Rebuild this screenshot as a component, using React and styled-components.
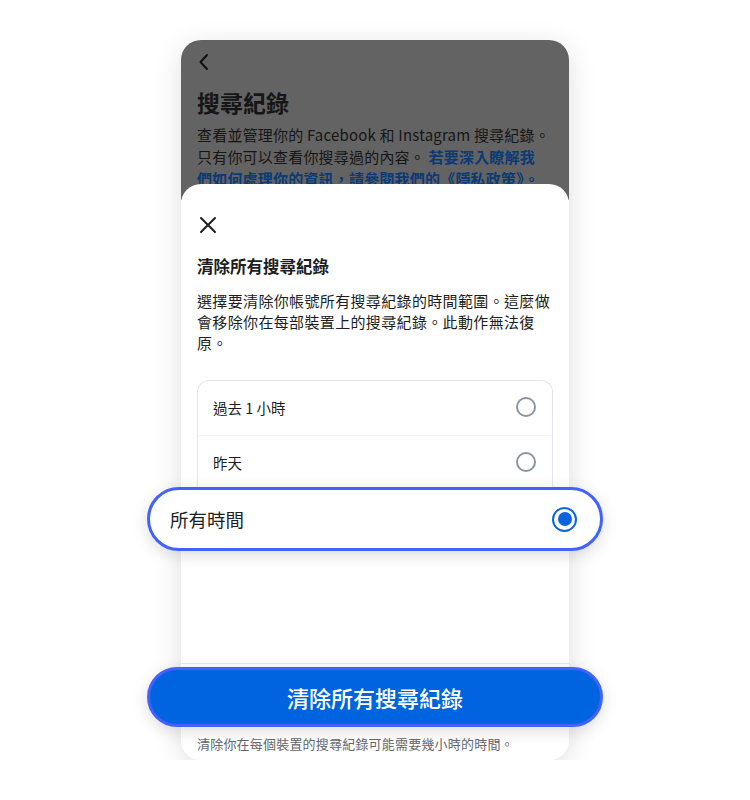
import React from 'react';
import styled, { createGlobalStyle } from 'styled-components';

const GlobalStyle = createGlobalStyle`
  body {
    margin: 0;
    background: #ffffff;
    font-family: "Noto Sans CJK TC", Inter, sans-serif;
    color: #1c1e21;
  }
`;

const Page = styled.div`
  display: flex;
  justify-content: center;
  padding-top: 40px;
`;

const Phone = styled.div`
  width: 388px;
  height: 720px;
  border-radius: 20px;
  background: #ffffff;
  box-shadow: 0 6px 28px rgba(0, 0, 0, 0.13);
  display: flex;
  flex-direction: column;
`;

/* dimmed page behind the sheet */
const Backdrop = styled.div`
  height: 160px;
  flex-shrink: 0;
  overflow: hidden;
  background: #636363;
  border-radius: 20px 20px 0 0;
  padding: 12px 16px 0;
  box-sizing: border-box;
  color: #161616;
`;

const BackButton = styled.div`
  width: 20px;
  height: 20px;
  display: flex;
  align-items: center;
`;

const PageTitle = styled.h1`
  margin: 16px 0 0;
  font-size: 23px;
  line-height: 28px;
  font-weight: 700;
`;

const PageText = styled.p`
  margin: 8px 0 0;
  font-size: 15px;
  line-height: 22px;
  letter-spacing: 0.2px;
  white-space: nowrap;
`;

const Link = styled.span`
  color: #0b3a75;
  font-weight: 700;
`;

const Sheet = styled.div`
  flex: 1;
  margin-top: -16px;
  background: #ffffff;
  border-radius: 20px;
  padding: 0 16px;
  display: flex;
  flex-direction: column;
  position: relative;
`;

const CloseButton = styled.div`
  margin-top: 30px;
  height: 22px;
  display: flex;
  align-items: center;
`;

const SheetTitle = styled.h2`
  margin: 18px 0 0;
  font-size: 16.5px;
  line-height: 24px;
  font-weight: 700;
`;

const SheetText = styled.p`
  margin: 12px 0 0;
  font-size: 15px;
  line-height: 21px;
  letter-spacing: 0.35px;
`;

const OptionList = styled.div`
  margin-top: 27px;
  border: 1px solid #e4e6eb;
  border-bottom: none;
  border-radius: 12px 12px 0 0;
`;

const OptionRow = styled.div`
  height: ${(p) => (p.$divider ? '55px' : '54px')};
  box-sizing: border-box;
  display: flex;
  align-items: center;
  justify-content: space-between;
  padding: 0 16px 2px 15px;
  font-size: 14.5px;
  border-top: ${(p) => (p.$divider ? '1px solid #f0f2f5' : 'none')};
`;

const Radio = styled.span`
  width: 20px;
  height: 20px;
  box-sizing: border-box;
  border-radius: 50%;
  border: 2px solid #8a96a3;
`;

const HighlightRow = styled.div`
  margin: -3px -50px 0;
  height: 64px;
  box-sizing: border-box;
  border: 3px solid #4262fb;
  border-radius: 32px;
  background: #ffffff;
  box-shadow: 0 4px 16px rgba(0, 0, 0, 0.14);
  display: flex;
  align-items: center;
  justify-content: space-between;
  padding: 0 23px 0 20px;
  font-size: 18.5px;
  position: relative;
`;

const SelectedRadio = styled.span`
  width: 25px;
  height: 25px;
  box-sizing: border-box;
  border-radius: 50%;
  border: 2.5px solid #0a63e0;
  display: flex;
  align-items: center;
  justify-content: center;

  &::after {
    content: '';
    width: 14px;
    height: 14px;
    border-radius: 50%;
    background: #0a63e0;
  }
`;

const Spacer = styled.div`
  flex: 1;
`;

const Footer = styled.div`
  margin: 0 -16px;
  padding: 3px 16px 8px;
  border-top: 1px solid #e9ebee;
`;

const PrimaryButton = styled.div`
  margin: 0 -50px;
  height: 60px;
  box-sizing: border-box;
  border: 3px solid #4262fb;
  border-radius: 30px;
  background: #0064e0;
  box-shadow: 0 4px 16px rgba(0, 0, 0, 0.14);
  color: #ffffff;
  font-size: 22px;
  font-weight: 500;
  display: flex;
  align-items: center;
  justify-content: center;
  position: relative;
`;

const FootNote = styled.div`
  margin-top: 9px;
  font-size: 13px;
  line-height: 16px;
  letter-spacing: 0.2px;
  color: #65676b;
`;

const App = () => {
  return (
    <Page>
      <GlobalStyle />
      <Phone>
        <Backdrop>
          <BackButton>
            <svg width="14" height="18" viewBox="0 0 14 18" fill="none">
              <path d="M10 2 L3.5 9 L10 16" stroke="#111" strokeWidth="2" strokeLinecap="round" strokeLinejoin="round" />
            </svg>
          </BackButton>
          <PageTitle>搜尋紀錄</PageTitle>
          <PageText>
            查看並管理你的 Facebook 和 Instagram 搜尋紀錄。
            <br />
            只有你可以查看你搜尋過的內容。 <Link>若要深入瞭解我</Link>
            <br />
            <Link>們如何處理你的資訊，請參閱我們的《隱私政策》。</Link>
          </PageText>
        </Backdrop>
        <Sheet>
          <CloseButton>
            <svg width="22" height="22" viewBox="0 0 22 22" fill="none">
              <path d="M4 4 L18 18 M18 4 L4 18" stroke="#1c1e21" strokeWidth="2" strokeLinecap="round" />
            </svg>
          </CloseButton>
          <SheetTitle>清除所有搜尋紀錄</SheetTitle>
          <SheetText>
            選擇要清除你帳號所有搜尋紀錄的時間範圍。這麼做會移除你在每部裝置上的搜尋紀錄。此動作無法復原。
          </SheetText>
          <OptionList>
            <OptionRow>
              過去 1 小時
              <Radio />
            </OptionRow>
            <OptionRow $divider>
              昨天
              <Radio />
            </OptionRow>
          </OptionList>
          <HighlightRow>
            所有時間
            <SelectedRadio />
          </HighlightRow>
          <Spacer />
          <Footer>
            <PrimaryButton>清除所有搜尋紀錄</PrimaryButton>
            <FootNote>清除你在每個裝置的搜尋紀錄可能需要幾小時的時間。</FootNote>
          </Footer>
        </Sheet>
      </Phone>
    </Page>
  );
};

export default App;
